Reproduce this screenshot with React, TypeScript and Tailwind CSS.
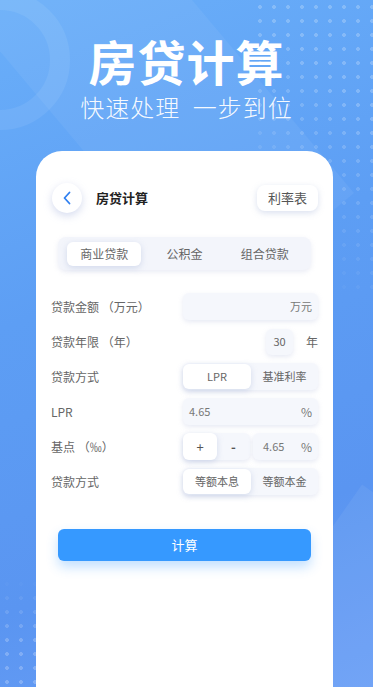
import React from "react";

const font = { fontFamily: '"Noto Sans CJK SC", "Noto Sans", sans-serif' };

function Row({ label, children }: { label: React.ReactNode; children: React.ReactNode }) {
  return (
    <div className="flex h-[27px] items-center justify-between">
      <div className="text-[12px] text-[#666]">{label}</div>
      {children}
    </div>
  );
}

const soft = "bg-[#f5f7fc] shadow-[0_2px_5px_rgba(170,180,215,0.28)]";
const pill = "bg-white shadow-[0_2px_6px_rgba(150,165,210,0.35)]";

export default function App() {
  return (
    <div
      style={font}
      className="relative h-[687px] w-[373px] overflow-hidden bg-[linear-gradient(160deg,#6aaff9_0%,#5d9ef4_40%,#5a95f1_75%,#6a9ff6_100%)]"
    >
      {/* decorations */}
      <div className="absolute left-[-70px] top-[-10px] h-[140px] w-[140px] rounded-full border-[20px] border-white/[0.07]" />
      <div className="absolute left-[60px] top-[-120px] h-[420px] w-[180px] rotate-[-40deg] bg-white/[0.05]" />
      <div className="absolute right-0 top-0 h-[290px] w-[120px] bg-[radial-gradient(circle,rgba(255,255,255,0.22)_1.6px,transparent_2.2px)] bg-[length:14px_14px] [mask-image:linear-gradient(225deg,black_30%,transparent_85%)]" />
      <div className="absolute bottom-0 left-0 h-[110px] w-[40px] bg-[radial-gradient(circle,rgba(255,255,255,0.22)_1.6px,transparent_2.2px)] bg-[length:14px_14px] [mask-image:linear-gradient(0deg,black_40%,transparent_100%)]" />
      <div className="absolute bottom-[-80px] right-[-60px] h-[260px] w-[160px] rotate-[35deg] bg-white/[0.06]" />

      <div className="relative flex flex-col items-center">
        <div className="mt-[36px] text-[48px] font-bold leading-[48px] tracking-[1px] text-white">房贷计算</div>
        <div className="mt-[10px] text-[24px] font-light leading-[26px] tracking-[1px] text-white/95">
          快速处理&nbsp;&nbsp;一步到位
        </div>

        <div className="mt-[31px] h-[560px] w-[297px] self-start ml-[36px] rounded-t-[26px] bg-white px-[15px]">
          {/* header */}
          <div className="mt-[32px] flex items-center justify-between">
            <div className="flex items-center">
              <div className="ml-[1px] flex h-[30px] w-[30px] items-center justify-center rounded-full bg-white shadow-[0_3px_8px_rgba(150,165,215,0.4)]">
                <svg width="10" height="14" viewBox="0 0 10 14" fill="none">
                  <path d="M7.5 1.5 L2.5 7 L7.5 12.5" stroke="#2f7ff0" strokeWidth="1.8" strokeLinecap="round" strokeLinejoin="round" />
                </svg>
              </div>
              <div className="ml-[14px] text-[13px] font-bold text-[#222]">房贷计算</div>
            </div>
            <div className={`flex h-[26px] w-[61px] items-center justify-center rounded-[8px] text-[13px] text-[#555] ${pill}`}>
              利率表
            </div>
          </div>

          {/* tabs */}
          <div className="mx-[7px] mt-[24px] grid h-[33px] grid-cols-3 items-center rounded-[8px] bg-[#f3f5fb] px-[6px] shadow-[0_2px_5px_rgba(170,180,215,0.25)]">
            <div className={`mx-[3px] flex h-[24px] items-center justify-center rounded-[6px] text-[12px] text-[#666] ${pill}`}>商业贷款</div>
            <div className="flex items-center justify-center text-[12px] text-[#666]">公积金</div>
            <div className="flex items-center justify-center text-[12px] text-[#666]">组合贷款</div>
          </div>

          {/* form */}
          <div className="mt-[23px] flex flex-col gap-[8px]">
            <Row label="贷款金额 （万元）">
              <div className={`flex h-[27px] w-[135px] items-center justify-end rounded-[6px] pr-[6px] text-[11px] text-[#777] ${soft}`}>万元</div>
            </Row>
            <Row label="贷款年限 （年）">
              <div className="flex items-center">
                <div className={`flex h-[26px] w-[27px] items-center justify-center rounded-[6px] text-[11px] text-[#666] ${soft}`}>30</div>
                <div className="ml-[13px] text-[12px] text-[#666]">年</div>
              </div>
            </Row>
            <Row label="贷款方式">
              <div className={`flex h-[27px] w-[135px] items-center rounded-[6px] ${soft}`}>
                <div className={`flex h-[25px] w-[68px] items-center justify-center rounded-[6px] text-[11px] text-[#666] ${pill}`}>LPR</div>
                <div className="flex flex-1 items-center justify-center text-[11px] text-[#666]">基准利率</div>
              </div>
            </Row>
            <Row label="LPR">
              <div className={`flex h-[27px] w-[135px] items-center justify-between rounded-[6px] pl-[6px] pr-[6px] text-[11px] text-[#777] ${soft}`}>
                <span>4.65</span>
                <span className="text-[12px]">%</span>
              </div>
            </Row>
            <Row label="基点 （‰）">
              <div className="flex items-center gap-[3px]">
                <div className={`flex h-[27px] w-[67px] items-center rounded-[6px] ${soft}`}>
                  <div className={`flex h-[27px] w-[34px] items-center justify-center rounded-[6px] text-[13px] text-[#555] ${pill}`}>+</div>
                  <div className="flex flex-1 items-center justify-center text-[13px] font-bold text-[#555]">-</div>
                </div>
                <div className={`flex h-[27px] w-[65px] items-center justify-between rounded-[6px] pl-[10px] pr-[6px] text-[11px] text-[#777] ${soft}`}>
                  <span>4.65</span>
                  <span className="text-[12px]">%</span>
                </div>
              </div>
            </Row>
            <Row label="贷款方式">
              <div className={`flex h-[27px] w-[135px] items-center rounded-[6px] ${soft}`}>
                <div className={`flex h-[25px] w-[68px] items-center justify-center rounded-[6px] text-[11px] text-[#666] ${pill}`}>等额本息</div>
                <div className="flex flex-1 items-center justify-center text-[11px] text-[#666]">等额本金</div>
              </div>
            </Row>
          </div>

          <div className="mx-[7px] mt-[34px] flex h-[32px] items-center justify-center rounded-[6px] bg-[#3699ff] text-[13px] text-white shadow-[0_6px_12px_rgba(54,153,255,0.3)]">
            计算
          </div>
        </div>
      </div>
    </div>
  );
}
